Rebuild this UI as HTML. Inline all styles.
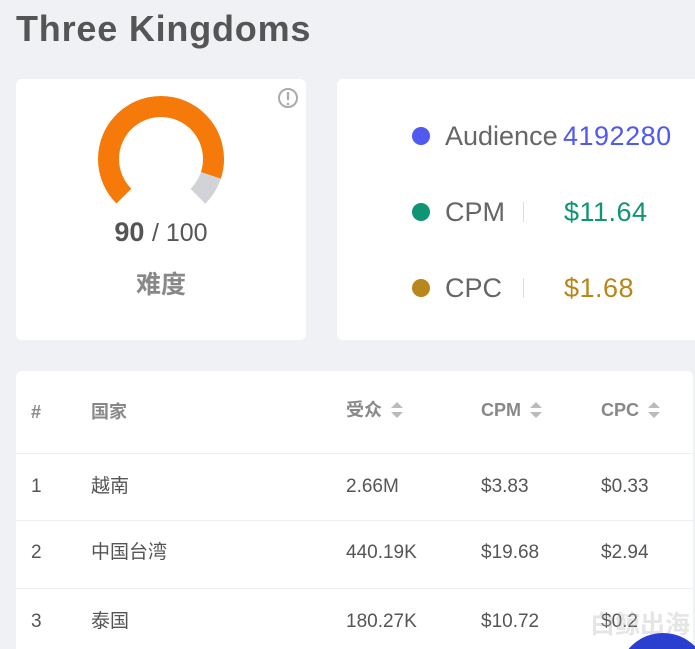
<!DOCTYPE html><html><head><meta charset="utf-8"><style>
html,body{margin:0;width:695px;height:649px;overflow:hidden}
body{background:#f0f1f5;font-family:"Liberation Sans","Noto Sans CJK SC",sans-serif;position:relative;color:#555}
.t{position:absolute;left:16px;top:8px;font-size:36px;font-weight:bold;color:#555;letter-spacing:0.8px}
.c{position:absolute;background:#fff;border-radius:6px}
.ab{position:absolute}
.dot{position:absolute;width:18px;height:18px;border-radius:50%}
.lab{position:absolute;font-size:27px;color:#666;line-height:34px}
.val{position:absolute;font-size:27px;line-height:34px;letter-spacing:0.5px}
.row{position:absolute;left:0;right:0;border-top:1px solid #eceef3}
.cell{position:absolute;font-size:19px;color:#555;line-height:24px;height:24px}
.h{position:absolute;font-size:18px;font-weight:bold;color:#888;line-height:24px;height:24px}
.s{display:inline-block;vertical-align:-3px;margin-left:8px}
</style></head><body>
<div class="t">Three Kingdoms</div>
<div class="c" style="left:16px;top:79px;width:290px;height:261px">
<svg class="ab" style="left:0;top:0" width="290" height="261"><g transform="translate(145,80) rotate(135)"><circle r="52.5" fill="none" stroke="#f57a0a" stroke-width="21" stroke-dasharray="222.7 400"/><circle r="52.5" fill="none" stroke="#d2d3d7" stroke-width="21" stroke-dasharray="0 222.7 24.7 400"/></g>
<circle cx="272" cy="19" r="9" fill="none" stroke="#aaa" stroke-width="2"/><line x1="272" y1="13" x2="272" y2="21" stroke="#aaa" stroke-width="2.2"/><circle cx="272" cy="25" r="1.3" fill="#aaa"/></svg>
<div class="ab" style="left:0;width:290px;top:138px;text-align:center;font-size:27px;color:#555"><b>90</b> <span style="font-size:25px">/ 100</span></div>
<div class="ab" style="left:0;width:290px;top:186px;text-align:center;font-size:25px;font-weight:bold;color:#888">难度</div>
</div>
<div class="c" style="left:337px;top:79px;width:358px;height:261px;border-radius:6px 0 0 6px">
<div class="dot" style="left:75px;top:48px;background:#5059f0"></div><div class="lab" style="left:108px;top:40px">Audience</div><div class="val" style="left:226px;top:40px;color:#5059f0">4192280</div>
<div class="dot" style="left:75px;top:124px;background:#0f9474"></div><div class="lab" style="left:108px;top:116px">CPM</div><div class="ab" style="left:186px;top:123px;width:1px;height:20px;background:#ddd"></div><div class="val" style="left:227px;top:116px;color:#0f9474">$11.64</div>
<div class="dot" style="left:75px;top:200px;background:#b8861a"></div><div class="lab" style="left:108px;top:192px">CPC</div><div class="ab" style="left:186px;top:199px;width:1px;height:20px;background:#ddd"></div><div class="val" style="left:227px;top:192px;color:#b8861a">$1.68</div>
</div>
<div class="c" style="left:16px;top:371px;width:677px;height:278px;border-radius:6px 6px 0 0">
<div class="h" style="left:15px;top:29px">#</div>
<div class="h" style="left:75px;top:29px">国家</div>
<div class="h" style="left:330px;top:27px">受众<svg class="s" width="14" height="18"><path d="M1 7L7 1L13 7Z M1 11L7 17L13 11Z" fill="#bbb"/></svg></div>
<div class="h" style="left:465px;top:27px">CPM<svg class="s" width="14" height="18"><path d="M1 7L7 1L13 7Z M1 11L7 17L13 11Z" fill="#bbb"/></svg></div>
<div class="h" style="left:585px;top:27px">CPC<svg class="s" width="14" height="18"><path d="M1 7L7 1L13 7Z M1 11L7 17L13 11Z" fill="#bbb"/></svg></div>
<div class="row" style="top:82px"></div><div class="row" style="top:149px"></div><div class="row" style="top:217px"></div>
<div class="cell" style="left:15px;top:104px">1</div><div class="cell" style="left:75px;top:104px">越南</div><div class="cell" style="left:330px;top:104px">2.66M</div><div class="cell" style="left:465px;top:104px">$3.83</div><div class="cell" style="left:585px;top:104px">$0.33</div>
<div class="cell" style="left:15px;top:170px">2</div><div class="cell" style="left:75px;top:170px">中国台湾</div><div class="cell" style="left:330px;top:170px">440.19K</div><div class="cell" style="left:465px;top:170px">$19.68</div><div class="cell" style="left:585px;top:170px">$2.94</div>
<div class="cell" style="left:15px;top:239px">3</div><div class="cell" style="left:75px;top:239px">泰国</div><div class="cell" style="left:330px;top:239px">180.27K</div><div class="cell" style="left:465px;top:239px">$10.72</div><div class="cell" style="left:585px;top:239px">$0.2</div>
</div>
<div class="ab" style="left:590px;top:605px;font-size:25px;font-weight:bold;color:rgba(180,180,180,0.35)">白鲸出海</div>
<div class="ab" style="left:618px;top:633px;width:77px;height:16px;overflow:hidden"><div style="width:90px;height:90px;border-radius:50%;background:#2a3fd0"></div></div>
</body></html>
